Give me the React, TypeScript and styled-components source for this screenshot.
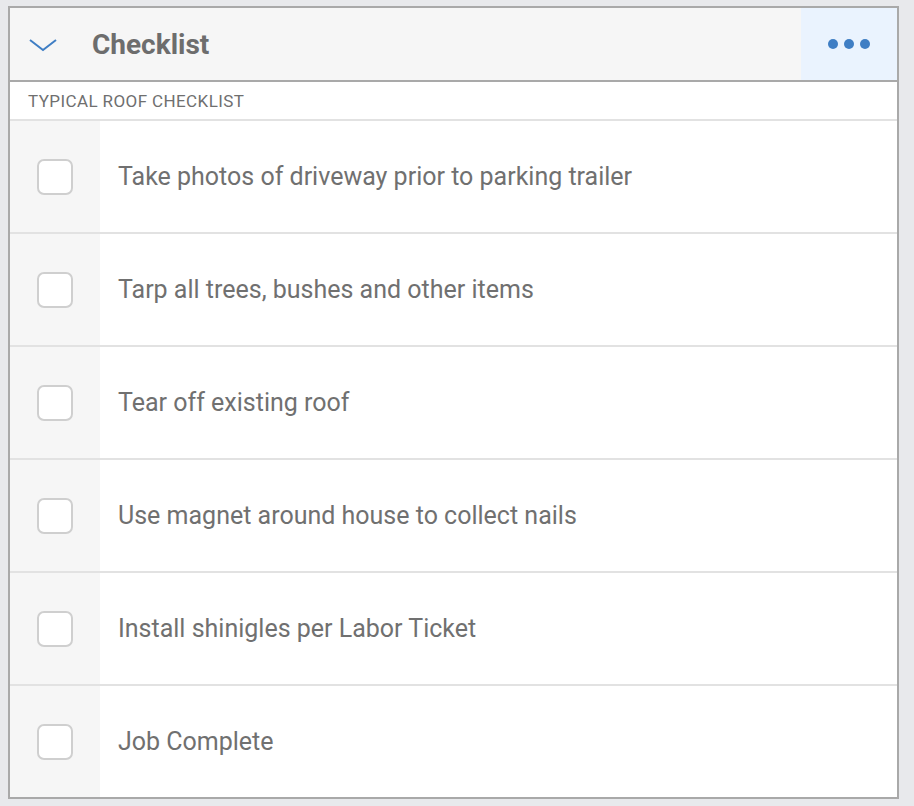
import React from "react";
import styled, { createGlobalStyle } from "styled-components";

const Global = createGlobalStyle`
  html, body { margin: 0; padding: 0; background: #e8e9ec; }
  body { font-family: Roboto, "Noto Sans", sans-serif; }
`;

const Page = styled.div`
  padding: 6px 16px 8px 8px;
`;

const Card = styled.div`
  border: 2px solid #a9a9a9;
  background: #fff;
  width: 891px;
  box-sizing: border-box;
`;

const Header = styled.div`
  display: flex;
  align-items: center;
  height: 72px;
  background: #f6f6f6;
  border-bottom: 2px solid #a9a9a9;
`;

const Chevron = styled.div`
  width: 82px;
  display: flex;
  justify-content: flex-start;
  padding-left: 18px;
  padding-top: 2px;
  box-sizing: border-box;
`;

const Title = styled.div`
  flex: 1;
  font-size: 28px;
  font-weight: 700;
  color: #6d6d6d;
`;

const More = styled.div`
  width: 96px;
  height: 100%;
  background: #eaf3fe;
  display: flex;
  align-items: center;
  justify-content: center;
  gap: 6px;
`;

const Dot = styled.span`
  width: 10px;
  height: 10px;
  border-radius: 50%;
  background: #3f7ec4;
`;

const Sub = styled.div`
  height: 37px;
  display: flex;
  align-items: center;
  padding-left: 18px;
  font-size: 17px;
  letter-spacing: 0.4px;
  color: #6f6f6f;
  border-bottom: 2px solid #e2e2e2;
`;

const Row = styled.div<{ $last?: boolean }>`
  display: flex;
  height: 111px;
  border-bottom: ${(p) => (p.$last ? "none" : "2px solid #e2e2e2")};
`;

const BoxCol = styled.div`
  width: 90px;
  background: #f6f6f6;
  display: flex;
  align-items: center;
  justify-content: center;
`;

const Box = styled.div`
  width: 32px;
  height: 32px;
  border: 2px solid #cfcfcf;
  border-radius: 7px;
  background: #fff;
`;

const Label = styled.div`
  flex: 1;
  display: flex;
  align-items: center;
  padding-left: 18px;
  font-size: 25px;
  color: #707070;
`;

const items = [
  "Take photos of driveway prior to parking trailer",
  "Tarp all trees, bushes and other items",
  "Tear off existing roof",
  "Use magnet around house to collect nails",
  "Install shinigles per Labor Ticket",
  "Job Complete",
];

export default function App() {
  return (
    <>
      <Global />
      <Page>
        <Card>
          <Header>
            <Chevron>
              <svg width="30" height="16" viewBox="0 0 30 16">
                <path d="M2 3 L15 13 L28 3" fill="none" stroke="#3f7ec4" strokeWidth="2" />
              </svg>
            </Chevron>
            <Title>Checklist</Title>
            <More>
              <Dot />
              <Dot />
              <Dot />
            </More>
          </Header>
          <Sub>TYPICAL ROOF CHECKLIST</Sub>
          {items.map((t, i) => (
            <Row key={t} $last={i === items.length - 1}>
              <BoxCol>
                <Box />
              </BoxCol>
              <Label>{t}</Label>
            </Row>
          ))}
        </Card>
      </Page>
    </>
  );
}
